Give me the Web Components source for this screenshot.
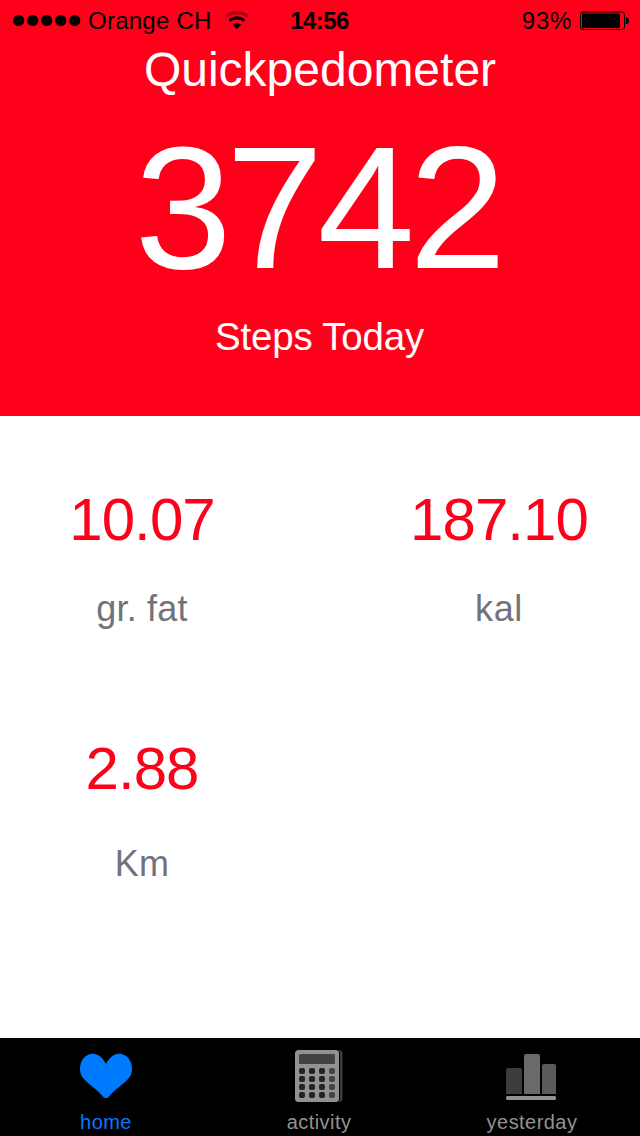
<!DOCTYPE html>
<html lang="en">
<head>
  <meta charset="utf-8">
  <title>Quickpedometer</title>
  <style>
    body {
      margin: 0;
      background: #ffffff;
      font-family: "Liberation Sans", Arial, sans-serif;
    }
  </style>
</head>
<body>
  <pedometer-app></pedometer-app>

  <script>
    class StatusBar extends HTMLElement {
      constructor() {
        super();
        this.shadowDOM = this.attachShadow({ mode: "open" });
      }

      connectedCallback() {
        this.render();
      }

      render() {
        this.shadowDOM.innerHTML = `
          <style>
            :host {
              display: grid;
              grid-template-columns: 1fr auto 1fr;
              height: 40px;
              padding: 0 11px 0 13px;
              box-sizing: border-box;
              color: #000000;
              font-size: 24px;
              line-height: 41px;
              white-space: nowrap;
            }
            .side {
              display: flex;
            }
            .right {
              justify-content: flex-end;
            }
            .carrier {
              margin: 0 12px 0 7px;
              letter-spacing: 0.25px;
            }
            .time {
              padding-right: 3px;
              font-weight: bold;
              letter-spacing: -0.6px;
            }
            .level {
              margin-right: 8px;
              letter-spacing: 0.7px;
            }
            svg {
              display: block;
              height: 40px;
            }
          </style>

          <div class="side">
            <svg width="68" height="40" viewBox="0 0 68 40">
              <circle cx="5.7" cy="20.5" r="5.6" />
              <circle cx="19.7" cy="20.5" r="5.6" />
              <circle cx="33.7" cy="20.5" r="5.6" />
              <circle cx="47.7" cy="20.5" r="5.6" />
              <circle cx="61.7" cy="20.5" r="5.6" />
            </svg>
            <span class="carrier">${this.getAttribute("carrier")}</span>
            <svg width="26" height="40" viewBox="0 0 26 40">
              <path d="M2 16.4 Q13 8.600 24 16.4" fill="none" stroke="#000" stroke-opacity=".32" stroke-width="3" />
              <path d="M5.4 20.6 Q13 15.2 20.6 20.6" fill="none" stroke="#000" stroke-width="3" />
              <path d="M8.8 24.7 Q13 21.2 17.2 24.7 L13 29 Z" />
            </svg>
          </div>
          <span class="time">${this.getAttribute("time")}</span>
          <div class="side right">
            <span class="level">${this.getAttribute("level")}</span>
            <svg width="49" height="40" viewBox="0 0 49 40">
              <rect x=".5" y="12" width="44" height="17.5" rx="2.5" fill="none" stroke="#000" />
              <rect x="2" y="13.5" width="38" height="14.5" rx="1" />
              <path d="M45.7 17.3 C48 17.3 49 18.5 49 20.7 S48 24.2 45.7 24.2 Z" />
            </svg>
          </div>
        `;
      }
    }

    class StepCounter extends HTMLElement {
      constructor() {
        super();
        this.shadowDOM = this.attachShadow({ mode: "open" });
      }

      connectedCallback() {
        this.render();
      }

      render() {
        this.shadowDOM.innerHTML = `
          <style>
            :host {
              display: block;
              height: 416px;
              background: #ff001b;
              color: #ffffff;
              text-align: center;
            }
            h1 {
              margin: 0;
              font-size: 48px;
              font-weight: normal;
              line-height: 60px;
            }
            .count {
              margin-top: 8px;
              padding-right: 5px;
              font-size: 175px;
              line-height: 200px;
              letter-spacing: -5.8px;
            }
            .caption {
              margin-top: 4px;
              padding-right: 1px;
              font-size: 38.5px;
              line-height: 50px;
              letter-spacing: -0.2px;
            }
          </style>

          <slot name="status"></slot>
          <h1>${this.getAttribute("heading")}</h1>
          <div class="count">${this.getAttribute("count")}</div>
          <div class="caption"><slot></slot></div>
        `;
      }
    }

    class MetricItem extends HTMLElement {
      constructor() {
        super();
        this.shadowDOM = this.attachShadow({ mode: "open" });
      }

      connectedCallback() {
        this.render();
      }

      render() {
        this.shadowDOM.innerHTML = `
          <style>
            :host {
              display: flex;
              flex-direction: column;
              align-items: center;
              gap: var(--metric-gap, 31px);
            }
            .value {
              color: #ff001b;
              font-size: 60px;
              line-height: 70px;
              letter-spacing: -0.9px;
            }
            .unit {
              color: #70737b;
              font-size: 36px;
              line-height: 46px;
              letter-spacing: var(--unit-spacing, 0.2px);
            }
          </style>

          <div class="value">${this.getAttribute("value")}</div>
          <div class="unit"><slot></slot></div>
        `;
      }
    }

    const icons = {
      heart: `
        <path fill="#007aff" d="M30 20 C33 13.5 38 9.7 43 9.7 C50.5 9.7 56 16 56 25 C56 37 43 40.5 32.6 53 Q31.8 54 30.8 54 H29.2 Q28.2 54 27.4 53 C17 40.5 4 37 4 25 C4 16 9.5 9.7 17 9.7 C22 9.7 27 13.5 30 20 Z" />`,
      calculator: `
        <rect x="14" y="6" width="39.5" height="52" rx="3.5" fill="#3c3c3c" />
        <rect x="6" y="6" width="45" height="52" rx="3.5" fill="#000" />
        <rect x="6" y="6" width="44" height="52" rx="3.5" fill="#929292" />
        <rect x="10" y="10" width="36" height="10" rx="1.5" fill="#434343" />
        ${[24, 32, 40, 48].map((y) => [10, 20, 30, 40].map((x) => `
        <rect x="${x}" y="${y}" width="6" height="6" rx="2" fill="${x === 40 ? "#434343" : "#222222"}" />`).join("")).join("")}`,
      bars: `
        <path fill="#3c3c3c" d="M4 50 V26 Q4 24 6 24 H18 Q20 24 20 26 V50 Z" />
        <path fill="#6a6a6a" d="M22 50 V12 Q22 10 24 10 H36 Q38 10 38 12 V50 Z" />
        <path fill="#5a5a5a" d="M40 50 V22 Q40 20 42 20 H52 Q54 20 54 22 V50 Z" />
        <rect x="4" y="52" width="50" height="4" rx="1.5" fill="#929292" />`
    };

    class TabItem extends HTMLElement {
      constructor() {
        super();
        this.shadowDOM = this.attachShadow({ mode: "open" });
      }

      connectedCallback() {
        this.render();
      }

      render() {
        this.shadowDOM.innerHTML = `
          <style>
            :host {
              display: flex;
              flex-direction: column;
              align-items: center;
              gap: 6px;
              padding-top: 6px;
              color: #929292;
              font-size: 20px;
              line-height: 24px;
              letter-spacing: 0.45px;
            }
            :host([active]) {
              color: #007aff;
            }
            svg {
              display: block;
            }
          </style>

          <svg width="60" height="60" viewBox="0 0 60 60">${icons[this.getAttribute("icon")]}</svg>
          <span><slot></slot></span>
        `;
      }
    }

    class PedometerApp extends HTMLElement {
      constructor() {
        super();
        this.shadowDOM = this.attachShadow({ mode: "open" });
      }

      connectedCallback() {
        this.render();
      }

      render() {
        this.shadowDOM.innerHTML = `
          <style>
            :host {
              display: flex;
              flex-direction: column;
              width: 640px;
              height: 1136px;
              overflow: hidden;
            }
            main {
              flex: 1;
              display: grid;
              grid-template-columns: 284px 282px;
              grid-auto-rows: 249px;
              justify-content: space-between;
              padding-top: 69px;
              box-sizing: border-box;
            }
            .kal {
              --unit-spacing: 0.7px;
            }
            .km {
              --metric-gap: 37px;
            }
            nav {
              display: grid;
              grid-template-columns: 212px 214px 212px;
              height: 98px;
              background: #000000;
            }
          </style>

          <step-counter heading="Quickpedometer" count="3742">
            <status-bar slot="status" carrier="Orange CH" time="14:56" level="93%"></status-bar>
            Steps Today
          </step-counter>
          <main>
            <metric-item value="10.07">gr. fat</metric-item>
            <metric-item class="kal" value="187.10">kal</metric-item>
            <metric-item class="km" value="2.88">Km</metric-item>
          </main>
          <nav>
            <tab-item icon="heart" active>home</tab-item>
            <tab-item icon="calculator">activity</tab-item>
            <tab-item icon="bars">yesterday</tab-item>
          </nav>
        `;
      }
    }

    customElements.define("status-bar", StatusBar);
    customElements.define("step-counter", StepCounter);
    customElements.define("metric-item", MetricItem);
    customElements.define("tab-item", TabItem);
    customElements.define("pedometer-app", PedometerApp);
  </script>
</body>
</html>
